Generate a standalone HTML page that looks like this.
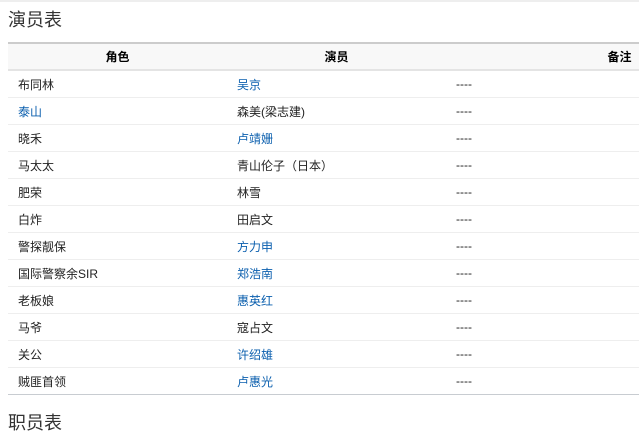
<!DOCTYPE html>
<html><head><meta charset="utf-8"><style>
html,body{margin:0;padding:0;width:639px;height:421px;overflow:hidden;background:#fff;font-family:"Liberation Sans","Noto Sans CJK SC",sans-serif;}
.top{position:absolute;left:0;top:0;width:639px;height:2px;background:#eee;}
h2{position:absolute;left:8px;top:7px;margin:0;font-size:18px;font-weight:normal;color:#333;line-height:26px;}
h2.b{top:410px;}
table{position:absolute;left:8px;top:42px;border-collapse:collapse;table-layout:fixed;width:785px;font-size:12px;color:#222;}
th{height:25px;background:#f8f8f8;border-top:2px solid #ccc;border-bottom:2px solid #e4e4e4;font-weight:bold;padding:0;color:#000;}
td{height:26px;border-bottom:1px solid #eee;padding:0 0 0 10px;}
tr:last-child td{border-bottom:1px solid #c8ccd1;}
a{color:#0b5fae;text-decoration:none;}
</style></head><body>
<div class="top"></div>
<h2>演员表</h2>
<table>
<colgroup><col style="width:219px"><col style="width:219px"><col style="width:347px"></colgroup>
<tr><th>角色</th><th>演员</th><th>备注</th></tr>
<tr><td>布同林</td><td><a>吴京</a></td><td>----</td></tr>
<tr><td><a>泰山</a></td><td>森美(梁志建)</td><td>----</td></tr>
<tr><td>晓禾</td><td><a>卢靖姗</a></td><td>----</td></tr>
<tr><td>马太太</td><td>青山伦子（日本）</td><td>----</td></tr>
<tr><td>肥荣</td><td>林雪</td><td>----</td></tr>
<tr><td>白炸</td><td>田启文</td><td>----</td></tr>
<tr><td>警探靓保</td><td><a>方力申</a></td><td>----</td></tr>
<tr><td>国际警察余SIR</td><td><a>郑浩南</a></td><td>----</td></tr>
<tr><td>老板娘</td><td><a>惠英红</a></td><td>----</td></tr>
<tr><td>马爷</td><td>寇占文</td><td>----</td></tr>
<tr><td>关公</td><td><a>许绍雄</a></td><td>----</td></tr>
<tr><td>贼匪首领</td><td><a>卢惠光</a></td><td>----</td></tr>
</table>
<h2 class="b">职员表</h2>
</body></html>
